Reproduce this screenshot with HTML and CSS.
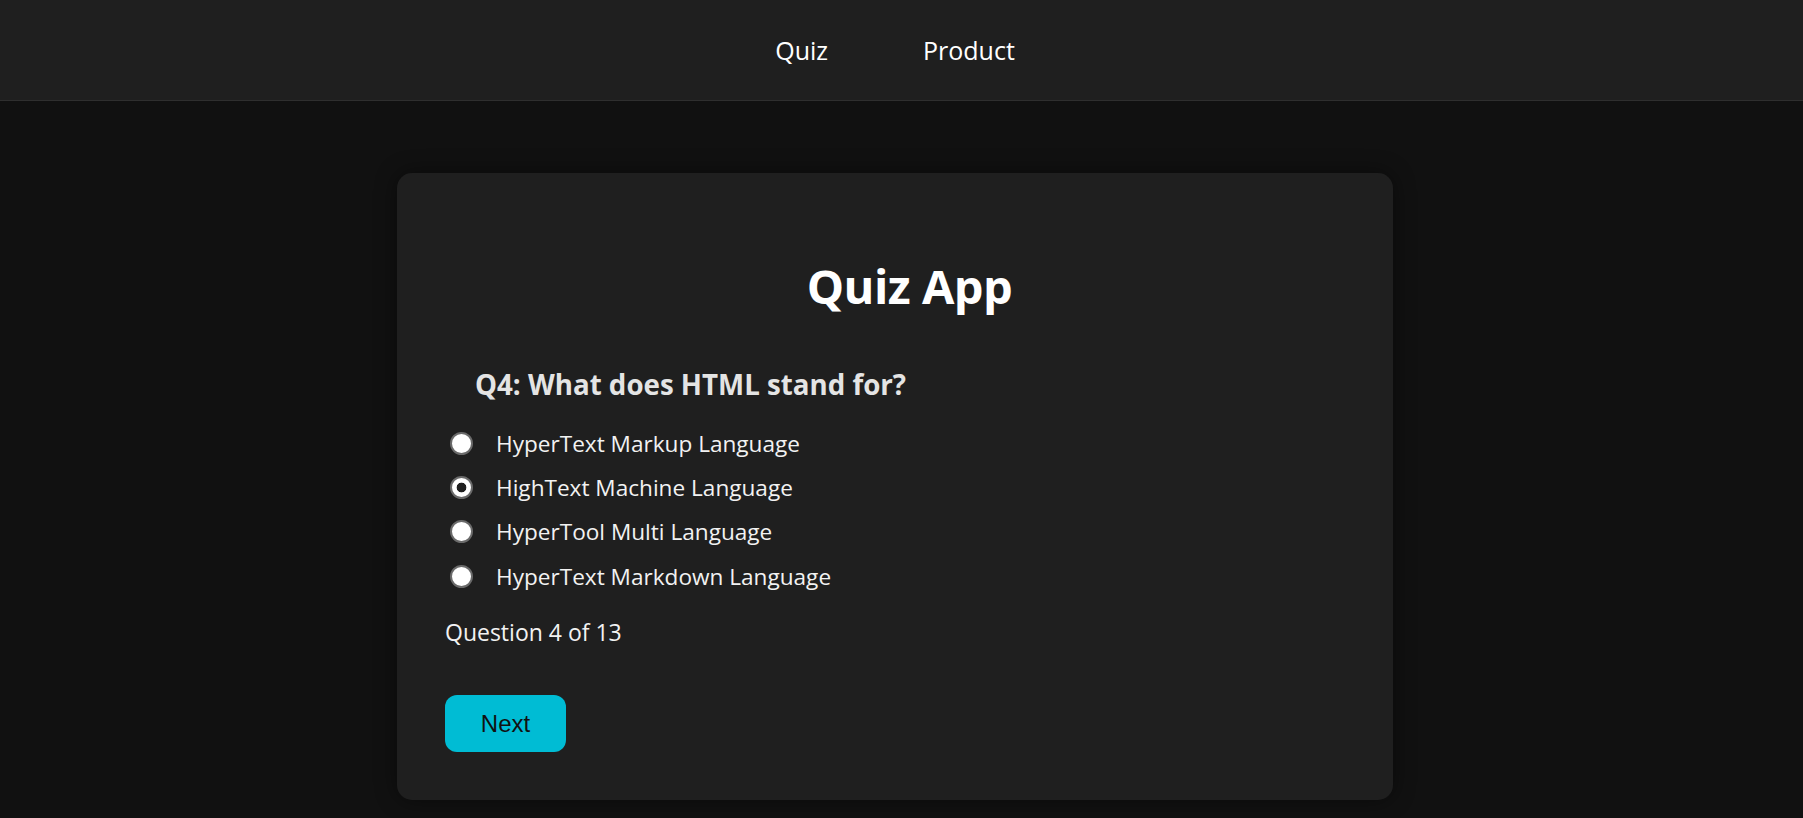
FILE: index.html
```html
<!DOCTYPE html>
<html lang="en">
<head>
<meta charset="utf-8">
<title>Quiz App</title>
<link rel="stylesheet" href="styles.css">
</head>
<body>
<header class="topbar">
  <nav class="nav">
    <a class="nav-link" href="#">Quiz</a>
    <a class="nav-link" href="#">Product</a>
  </nav>
</header>
<main class="page">
  <section class="card">
    <h1 class="title">Quiz App</h1>
    <h2 class="question">Q4: What does HTML stand for?</h2>
    <div class="options">
      <label class="option"><input class="radio" type="radio" name="q"><span>HyperText Markup Language</span></label>
      <label class="option"><input class="radio" type="radio" name="q" checked><span>HighText Machine Language</span></label>
      <label class="option"><input class="radio" type="radio" name="q"><span>HyperTool Multi Language</span></label>
      <label class="option"><input class="radio" type="radio" name="q"><span>HyperText Markdown Language</span></label>
    </div>
    <p class="progress">Question 4 of 13</p>
    <button class="next-btn" type="button">Next</button>
  </section>
</main>
</body>
</html>
```

FILE: styles.css
```css
* { box-sizing: border-box; }

html, body {
  margin: 0;
  padding: 0;
  background: #111111;
  color: #ffffff;
  font-family: "Open Sans", "Noto Sans", sans-serif;
}

body { min-height: 818px; }

.topbar {
  height: 101px;
  background: #1f1f1f;
  border-bottom: 1px solid #2f2f2f;
}

.nav {
  height: 100px;
  display: flex;
  align-items: center;
  justify-content: center;
  gap: 95px;
  padding-right: 13px;
}

.nav-link {
  color: #ffffff;
  text-decoration: none;
  font-size: 25px;
}

.page {
  padding: 72px 13px 0 0;
  display: flex;
  justify-content: center;
}

.card {
  width: 996px;
  background: #1f1f1f;
  border-radius: 15px;
  padding: 48px;
  box-shadow: 0 0 22px rgba(0, 0, 0, 0.45);
}

.title {
  margin: 35px 0 49px;
  padding-left: 29px;
  text-align: center;
  font-size: 47px;
  line-height: 60px;
  font-weight: 700;
  letter-spacing: -0.5px;
  color: #ffffff;
}

.question {
  margin: 0 0 18px;
  padding-left: 30px;
  font-size: 27.7px;
  line-height: 38px;
  font-weight: 700;
  color: #e4e4e4;
}

.options {
  display: flex;
  flex-direction: column;
}

.option {
  height: 44.3px;
  display: flex;
  align-items: center;
  gap: 23px;
  padding-left: 5px;
  font-size: 22.6px;
  color: #f2f2f2;
}

.radio {
  appearance: none;
  -webkit-appearance: none;
  margin: 0;
  width: 23px;
  height: 23px;
  border-radius: 50%;
  border: 2px solid #6a6a6a;
  background: #ffffff;
  flex: none;
}

.radio:checked {
  background: radial-gradient(circle, #1f1f1f 0 4.5px, #ffffff 5.2px);
}

.progress {
  margin: 19px 0 0;
  font-size: 23px;
  line-height: 30px;
  color: #f2f2f2;
}

.next-btn {
  margin-top: 48px;
  width: 121px;
  height: 57px;
  border: none;
  border-radius: 12px;
  background: #00bcd4;
  color: #111111;
  font-family: "Liberation Sans", Arial, sans-serif;
  font-size: 24px;
  padding: 0;
  display: block;
}
```
